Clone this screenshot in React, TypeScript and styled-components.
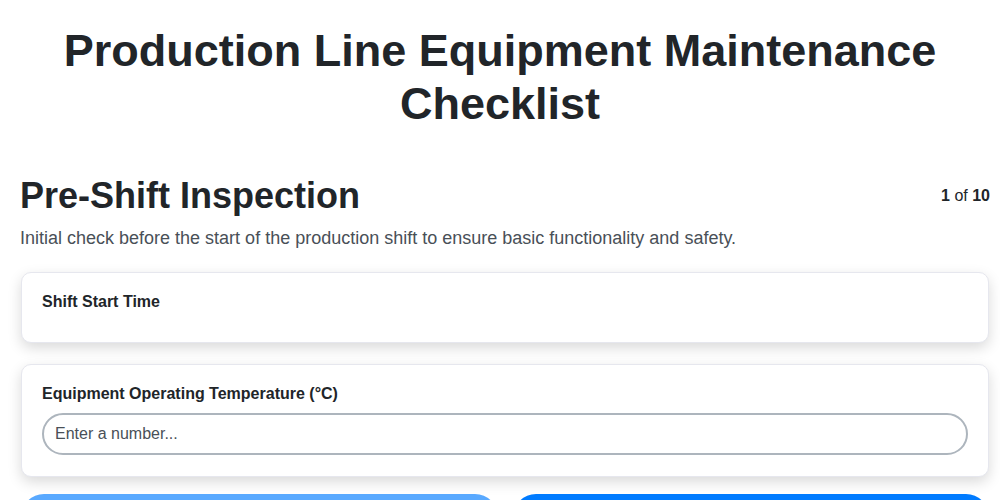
import React from "react";
import styled, { createGlobalStyle } from "styled-components";

const GlobalStyle = createGlobalStyle`
  body {
    margin: 0;
    background: #ffffff;
    font-family: "Liberation Sans", Arial, sans-serif;
    color: #212529;
  }
  * {
    box-sizing: border-box;
  }
`;

const Page = styled.div`
  padding: 24px 0 20px;
`;

const Title = styled.h1`
  margin: 0 0 44px;
  text-align: center;
  font-size: 45px;
  line-height: 53px;
  font-weight: 700;
  color: #212529;
`;

const Content = styled.div`
  padding: 0 10px 0 20px;
`;

const SectionHeader = styled.div`
  display: flex;
  justify-content: space-between;
  align-items: center;
`;

const SectionTitle = styled.h2`
  margin: 0;
  font-size: 36px;
  line-height: 43px;
  font-weight: 700;
`;

const Counter = styled.div`
  font-size: 16px;
  color: #212529;

  b {
    font-weight: 700;
  }
`;

const Description = styled.p`
  margin: 11px 0 23px;
  font-size: 18px;
  line-height: 21px;
  color: #495057;
`;

const Card = styled.div<{ $last?: boolean }>`
  width: 968px;
  margin-left: 1px;
  margin-bottom: ${(p) => (p.$last ? "17px" : "21px")};
  padding: 19px 20px 21px;
  background: #ffffff;
  border: 1px solid #e6e7ee;
  border-radius: 10px;
  box-shadow: 0 5px 14px rgba(0, 0, 0, 0.15);
`;

const Label = styled.div`
  margin-bottom: 10px;
  font-size: 16px;
  line-height: 19px;
  font-weight: 700;
  color: #212529;
`;

const NumberInput = styled.input`
  display: block;
  width: 100%;
  height: 42px;
  padding: 0 11px;
  font-family: "Liberation Sans", Arial, sans-serif;
  font-size: 16px;
  color: #212529;
  border: 2px solid #adb5bd;
  border-radius: 21px;
  outline: none;
  background: #ffffff;

  &::placeholder {
    color: #495057;
  }
`;

const Nav = styled.div`
  display: flex;
  gap: 15px;
  width: 968px;
  margin-left: 1px;
`;

const NavButton = styled.button<{ $muted?: boolean }>`
  flex: 1;
  height: 46px;
  border: none;
  border-radius: 23px;
  background: ${(p) => (p.$muted ? "#59a9ff" : "#007bff")};
  color: #ffffff;
  font-family: "Liberation Sans", Arial, sans-serif;
  font-size: 16px;
  font-weight: 700;
`;

export default function App() {
  return (
    <>
      <GlobalStyle />
      <Page>
        <Title>Production Line Equipment Maintenance Checklist</Title>
        <Content>
          <SectionHeader>
            <SectionTitle>Pre-Shift Inspection</SectionTitle>
            <Counter>
              <b>1</b> of <b>10</b>
            </Counter>
          </SectionHeader>
          <Description>
            Initial check before the start of the production shift to ensure basic functionality and safety.
          </Description>
          <Card>
            <Label>Shift Start Time</Label>
          </Card>
          <Card $last>
            <Label>Equipment Operating Temperature (°C)</Label>
            <NumberInput type="number" placeholder="Enter a number..." />
          </Card>
          <Nav>
            <NavButton $muted>Previous</NavButton>
            <NavButton>Next</NavButton>
          </Nav>
        </Content>
      </Page>
    </>
  );
}
